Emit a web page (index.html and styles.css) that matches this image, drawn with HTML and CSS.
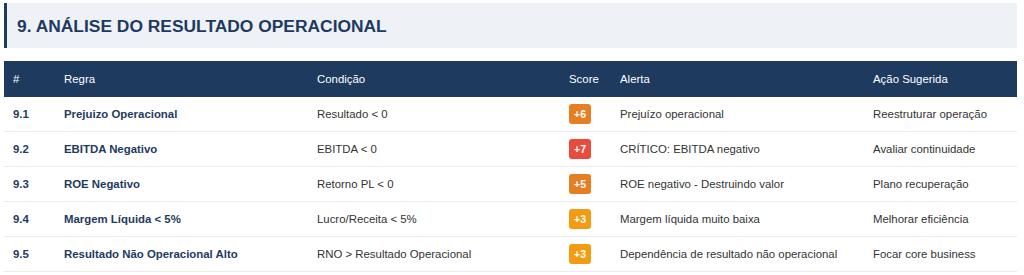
FILE: index.html
```html
<!DOCTYPE html>
<html lang="pt">
<head>
<meta charset="utf-8">
<link rel="stylesheet" href="styles.css">
</head>
<body>
<div class="page">
  <h2 class="section-title">9. ANÁLISE DO RESULTADO OPERACIONAL</h2>
  <table class="rules">
    <thead>
      <tr>
        <th class="c-num">#</th>
        <th class="c-rule">Regra</th>
        <th class="c-cond">Condição</th>
        <th class="c-score">Score</th>
        <th class="c-alert">Alerta</th>
        <th class="c-action">Ação Sugerida</th>
      </tr>
    </thead>
    <tbody>
      <tr>
        <td class="num">9.1</td>
        <td class="rule">Prejuizo Operacional</td>
        <td>Resultado &lt; 0</td>
        <td><span class="badge orange">+6</span></td>
        <td>Prejuízo operacional</td>
        <td>Reestruturar operação</td>
      </tr>
      <tr>
        <td class="num">9.2</td>
        <td class="rule">EBITDA Negativo</td>
        <td>EBITDA &lt; 0</td>
        <td><span class="badge red">+7</span></td>
        <td>CRÍTICO: EBITDA negativo</td>
        <td>Avaliar continuidade</td>
      </tr>
      <tr>
        <td class="num">9.3</td>
        <td class="rule">ROE Negativo</td>
        <td>Retorno PL &lt; 0</td>
        <td><span class="badge orange">+5</span></td>
        <td>ROE negativo - Destruindo valor</td>
        <td>Plano recuperação</td>
      </tr>
      <tr>
        <td class="num">9.4</td>
        <td class="rule">Margem Líquida &lt; 5%</td>
        <td>Lucro/Receita &lt; 5%</td>
        <td><span class="badge yellow">+3</span></td>
        <td>Margem líquida muito baixa</td>
        <td>Melhorar eficiência</td>
      </tr>
      <tr>
        <td class="num">9.5</td>
        <td class="rule">Resultado Não Operacional Alto</td>
        <td>RNO &gt; Resultado Operacional</td>
        <td><span class="badge yellow">+3</span></td>
        <td>Dependência de resultado não operacional</td>
        <td>Focar core business</td>
      </tr>
    </tbody>
  </table>
</div>
</body>
</html>
```

FILE: styles.css
```css
html, body {
  margin: 0;
  padding: 0;
  background: #ffffff;
}

body {
  font-family: "Liberation Sans", Arial, sans-serif;
  color: #333333;
}

.page {
  padding: 3px 7px 0 4px;
}

.section-title {
  margin: 0 0 13px 0;
  height: 45px;
  box-sizing: border-box;
  display: flex;
  align-items: center;
  padding: 1px 0 0 10px;
  background: #eef2f7;
  border-left: 3px solid #1e3a5f;
  color: #1e3a5f;
  font-size: 17.4px;
  font-weight: bold;
}

.rules {
  width: 100%;
  border-collapse: collapse;
  font-size: 11.4px;
  table-layout: fixed;
}

.rules th {
  background: #1e3a5f;
  color: #ffffff;
  font-weight: normal;
  text-align: left;
  height: 36px;
  padding: 0 7px 0 9px;
}

.rules td {
  height: 34px;
  padding: 0 7px 0 9px;
  border-bottom: 1px solid #ebebeb;
  color: #333333;
  white-space: nowrap;
}

.c-num { width: 35px; }
.c-rule { width: 237px; }
.c-cond { width: 236px; }
.c-score { width: 35px; }
.c-alert { width: 237px; }

.rules td.num,
.rules td.rule {
  font-weight: bold;
  color: #1e3a5f;
}

.badge {
  display: inline-block;
  min-width: 22px;
  height: 20px;
  line-height: 20px;
  box-sizing: border-box;
  padding: 0 4px;
  border-radius: 3px;
  color: #ffffff;
  font-weight: bold;
  font-size: 10.5px;
  text-align: center;
}

.badge.orange { background: #e67e22; }
.badge.red { background: #e74c3c; }
.badge.yellow { background: #f39c12; }
```
